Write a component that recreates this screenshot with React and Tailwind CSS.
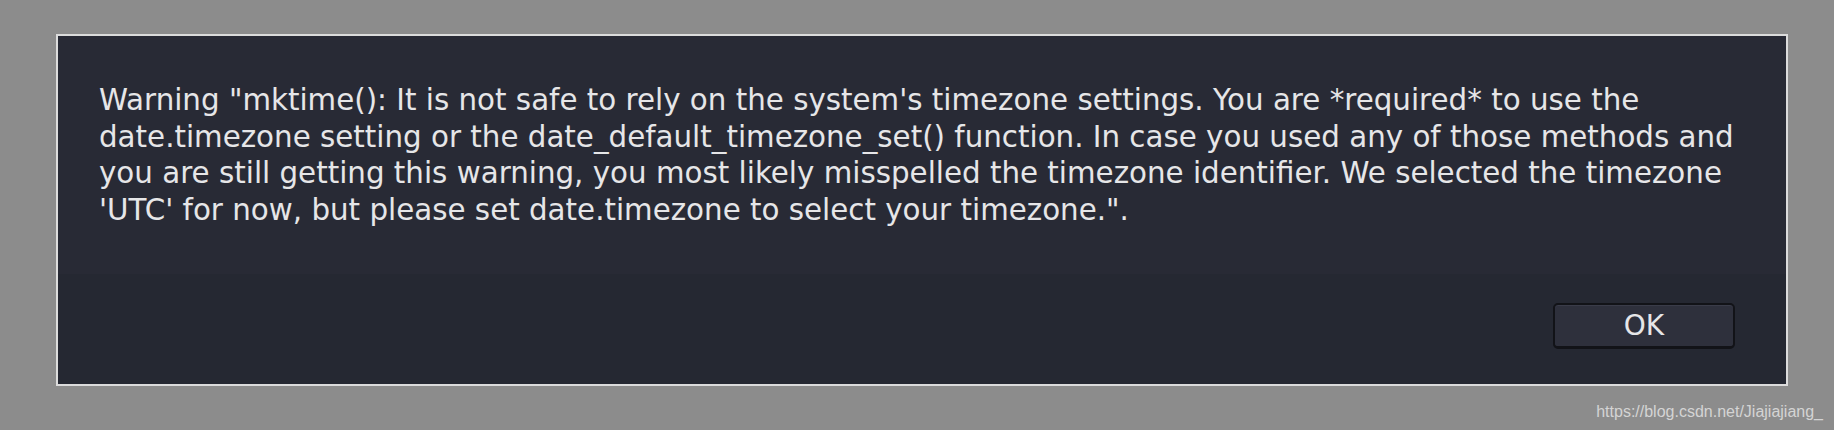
import React from "react";

export default function App() {
  return (
    <div className="relative w-[1834px] h-[430px] bg-[#8c8c8c] overflow-hidden pt-[34px] pl-[56px]">
      <div className="w-[1732px] h-[352px] border-2 border-[#dcdcdc] flex flex-col bg-[#252832]">
        <div
          className="h-[238px] bg-[#282a35] pl-[41px] pr-[24px] pt-[46px] text-[29.34px] leading-[36.6px] text-[#e6e6e8]"
          style={{ fontFamily: '"DejaVu Sans", sans-serif' }}
        >
          Warning "mktime(): It is not safe to rely on the system's timezone settings. You are *required* to use the date.timezone setting or the date_default_timezone_set() function. In case you used any of those methods and you are still getting this warning, you most likely misspelled the timezone identifier. We selected the timezone 'UTC' for now, but please set date.timezone to select your timezone.".
        </div>
        <div className="flex-1 flex justify-end items-start pt-[29px] pr-[51px]">
          <button
            className="w-[182px] h-[46px] rounded-[5px] border-2 border-b-[3px] border-[#121318] bg-[#2e303c] shadow-[inset_0_1px_0_#3a3c49] text-[28px] leading-none text-[#e6e6e8] flex items-center justify-center"
            style={{ fontFamily: '"DejaVu Sans", sans-serif' }}
          >
            OK
          </button>
        </div>
      </div>
      <div
        className="absolute right-[11px] top-[404px] text-[16px] leading-none text-[#d4d4d4]"
        style={{ fontFamily: '"Liberation Sans", Arial, sans-serif' }}
      >
        https://blog.csdn.net/Jiajiajiang_
      </div>
    </div>
  );
}
